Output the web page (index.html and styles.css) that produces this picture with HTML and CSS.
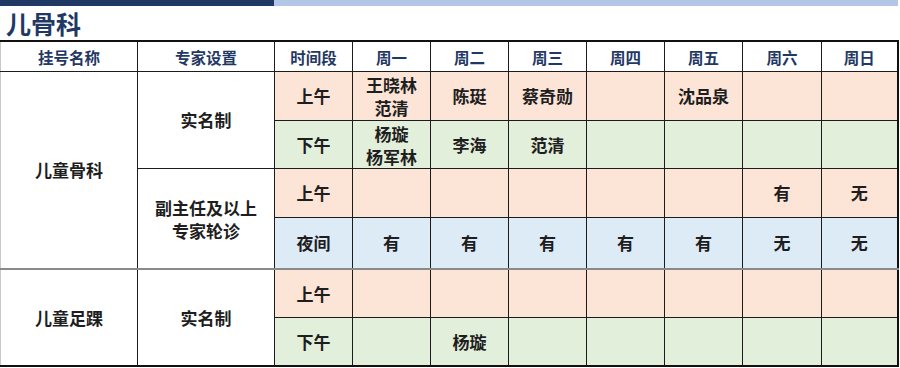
FILE: index.html
```html
<!DOCTYPE html>
<html lang="zh-CN">
<head>
<meta charset="utf-8">
<title>儿骨科</title>
<link rel="stylesheet" href="styles.css">
</head>
<body>
<div class="page">
  <div class="topbar"><span class="bar-dark"></span><span class="bar-light"></span></div>
  <h1 class="title">儿骨科</h1>
  <table class="schedule">
    <colgroup>
      <col class="c-wide"><col class="c-wide"><col class="c-day"><col class="c-day"><col class="c-day"><col class="c-day"><col class="c-day"><col class="c-day"><col class="c-sat"><col class="c-sun">
    </colgroup>
    <thead>
      <tr class="head">
        <th>挂号名称</th><th>专家设置</th><th>时间段</th><th>周一</th><th>周二</th><th>周三</th><th>周四</th><th>周五</th><th>周六</th><th>周日</th>
      </tr>
    </thead>
    <tbody>
      <tr class="am r1">
        <td class="label" rowspan="4">儿童骨科</td>
        <td class="label" rowspan="2">实名制</td>
        <td>上午</td><td class="two">王晓林<br>范清</td><td>陈珽</td><td>蔡奇勋</td><td></td><td>沈品泉</td><td></td><td></td>
      </tr>
      <tr class="pm r2">
        <td>下午</td><td class="two">杨璇<br>杨军林</td><td>李海</td><td>范清</td><td></td><td></td><td></td><td></td>
      </tr>
      <tr class="am r3">
        <td class="label two" rowspan="2">副主任及以上<br>专家轮诊</td>
        <td>上午</td><td></td><td></td><td></td><td></td><td></td><td>有</td><td>无</td>
      </tr>
      <tr class="night r4">
        <td>夜间</td><td>有</td><td>有</td><td>有</td><td>有</td><td>有</td><td>无</td><td>无</td>
      </tr>
      <tr class="am r5 group">
        <td class="label" rowspan="2">儿童足踝</td>
        <td class="label" rowspan="2">实名制</td>
        <td>上午</td><td></td><td></td><td></td><td></td><td></td><td></td><td></td>
      </tr>
      <tr class="pm r6">
        <td>下午</td><td></td><td>杨璇</td><td></td><td></td><td></td><td></td><td></td>
      </tr>
    </tbody>
  </table>
</div>
</body>
</html>
```

FILE: styles.css
```css
html, body {
  margin: 0;
  padding: 0;
  background: #ffffff;
}

body {
  font-family: "Noto Sans CJK SC", "Noto Sans", "Liberation Sans", sans-serif;
  color: #222222;
}

.page {
  width: 900px;
  height: 368px;
  overflow: hidden;
}

.topbar {
  display: flex;
  width: 898px;
  height: 6px;
}

.bar-dark {
  width: 274px;
  background: #203864;
}

.bar-light {
  flex: 1;
  background: #b4c6e7;
}

.title {
  margin: 0;
  height: 34px;
  padding-left: 6px;
  font-size: 25px;
  line-height: 34px;
  font-weight: 700;
  color: #1f3864;
}

.schedule {
  table-layout: fixed;
  border-collapse: collapse;
  width: 898px;
  border-top: 2px solid #111111;
  border-right: 2px solid #111111;
  border-bottom: 2px solid #111111;
  border-left: 1px solid #c8c8c8;
}

.c-wide { width: 137px; }
.c-day { width: 78px; }
.c-sat { width: 79px; }
.c-sun { width: 76px; }

.schedule th,
.schedule td {
  border: 1px solid #1c1c1c;
  padding: 0;
  text-align: center;
  vertical-align: middle;
  font-weight: 700;
}

.schedule th {
  height: 29px;
  font-size: 15.5px;
  color: #1f3864;
  background: #ffffff;
}

.schedule td {
  font-size: 17px;
  line-height: 22px;
  color: #1e1e1e;
}

.schedule td:first-child,
.schedule th:first-child {
  border-left: 1px solid #c8c8c8;
}

.am td { background: #fce4d6; }
.pm td { background: #e2efda; }
.night td { background: #ddebf7; }

.schedule td.label {
  background: #ffffff;
}

.schedule td.two {
  line-height: 23px;
}

.r1 td { height: 48px; }
.r2 td { height: 47px; }
.r3 td { height: 48px; }
.r4 td { height: 50px; }
.r5 td { height: 47px; }
.r6 td { height: 47px; }

.group td {
  border-top: 2px solid #8a8a8a;
}
```
